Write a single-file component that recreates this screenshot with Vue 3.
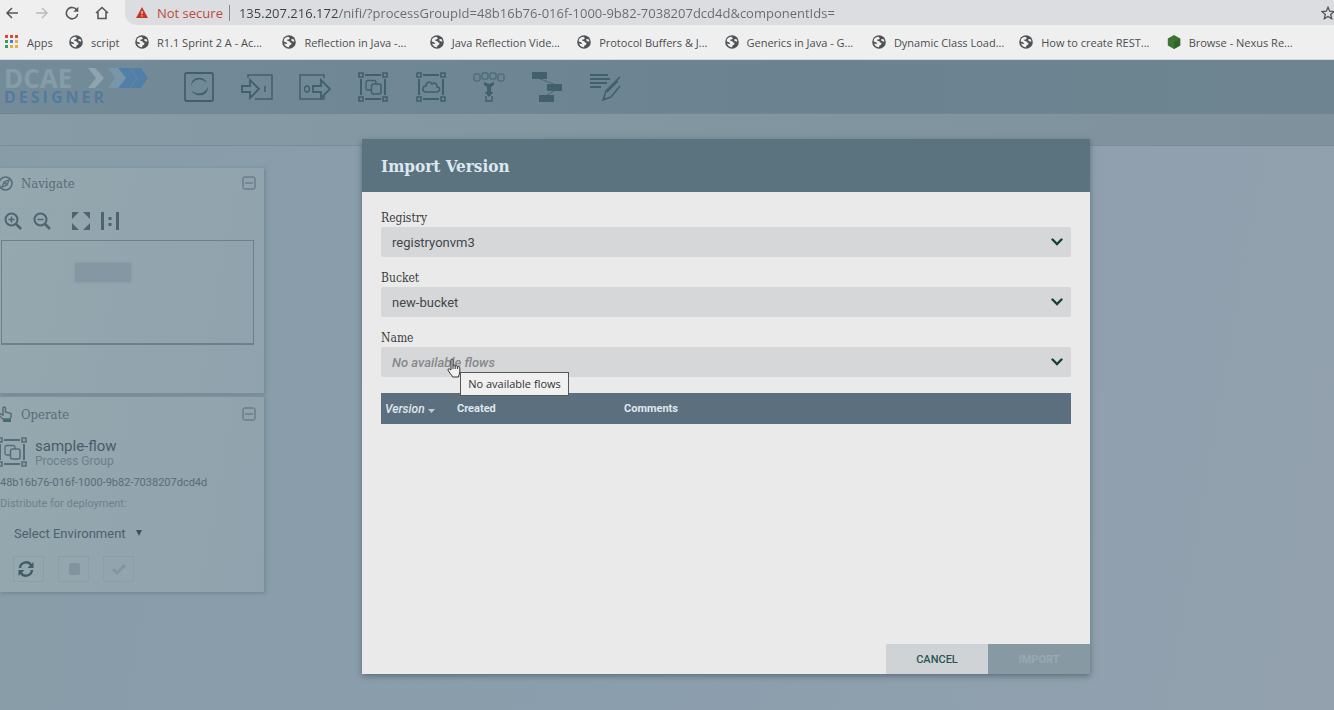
<script setup>
import { ref } from 'vue'

const url = ref('135.207.216.172/nifi/?processGroupId=48b16b76-016f-1000-9b82-7038207dcd4d&componentIds=')
const bookmarks = [
  'R1.1 Sprint 2 A - Ac...',
  'Reflection in Java -...',
  'Java Reflection Vide...',
  'Protocol Buffers & J...',
  'Generics in Java - G...',
  'Dynamic Class Load...',
  'How to create REST...',
]
const appDots = ['#d9483b', '#d9483b', '#d9483b', '#3a9a5b', '#3f7fd0', '#e0b13c', '#3a9a5b', '#e0b13c', '#e0b13c']
const fields = [
  { id: 'registry', label: 'Registry', value: 'registryonvm3', empty: false },
  { id: 'bucket', label: 'Bucket', value: 'new-bucket', empty: false },
  { id: 'name', label: 'Name', value: 'No available flows', empty: true },
]
</script>

<template>
  <div class="page">
    <svg class="defs" width="0" height="0" aria-hidden="true">
      <symbol id="globe" viewBox="0 0 14 14">
        <circle cx="7" cy="7" r="6.8" fill="#505356" />
        <path d="M2 4.200C3 2.600 4.600 1.800 6.300 1.700L8 3.200 6.600 4.400 5.400 4.600 5.200 5.800 7.400 6.200 8 7.400 9.600 7.800 9 9.800 7.500 10.600 7 12.300C4.600 12.200 2.800 10.900 2 8.600L4.200 9 5.400 8.400 4 7.200 1.700 6.600ZM9.200 4.300L11.300 3.900 12.200 5.600 12.300 6.800 10.500 6.300 9.300 5.600Z" fill="#f0f0f0" />
      </symbol>
      <symbol id="group" viewBox="0 0 30 30">
        <g fill="none" stroke="currentColor">
          <path d="M7 3H23M7 27H23M3 7V23M27 7V23" stroke-width="2" />
          <path d="M1 1H5V5H1ZM25 1H29V5H25ZM1 25H5V29H1ZM25 25H29V29H25Z" stroke-width="1.600" />
          <path d="M13 18H10A2 2 0 0 1 8 16V10.500A2 2 0 0 1 10 8.500H16A2 2 0 0 1 18 10.500V12" stroke-width="1.300" />
          <rect x="13.500" y="12" width="9.500" height="10" rx="2" stroke-width="1.500" />
        </g>
      </symbol>
      <symbol id="minus-box" viewBox="0 0 14 14">
        <rect x="1" y="1" width="12" height="12" rx="1.500" fill="none" stroke="currentColor" />
        <path d="M3 7H11" stroke="currentColor" />
      </symbol>
    </svg>

    <div class="browser">
      <div class="address-row">
        <div class="nav">
          <button aria-label="Back"><svg width="14" height="14" viewBox="0 0 14 14"><path d="M13 7H2M7 2L2 7L7 12" fill="none" stroke="#55585b" stroke-width="1.500" /></svg></button>
          <button aria-label="Forward"><svg width="14" height="14" viewBox="0 0 14 14"><path d="M1 7H12M7 2L12 7L7 12" fill="none" stroke="#b9babc" stroke-width="1.400" /></svg></button>
          <button aria-label="Reload"><svg width="14" height="14" viewBox="0 0 14 14"><path d="M11.700 3.800A5.700 5.700 0 1 0 12.700 8" fill="none" stroke="#55585b" stroke-width="1.600" /><path d="M13.300 .8V5.800H8.300Z" fill="#55585b" /></svg></button>
          <button aria-label="Home"><svg width="14" height="14" viewBox="0 0 14 14"><path d="M1 7L7 1.500L13 7M3 6V12.500H11V6" fill="none" stroke="#55585b" stroke-width="1.600" /></svg></button>
        </div>
        <div class="omnibox">
          <button class="unsafe"><svg width="12" height="11" viewBox="0 0 12 11"><path d="M6 0L12 11H0Z" fill="#c5372c" /><path d="M6 4V7M6 8.200V9.500" stroke="#f0dedd" stroke-width="1.200" /></svg>Not secure</button>
          <span class="bar"></span>
          <input v-model="url" class="url" aria-label="Address" />
          <button class="star" aria-label="Bookmark this page"><svg width="14" height="14" viewBox="0 0 14 14"><path d="M7 1.300L8.700 5.200 13 5.600 9.700 8.400 10.700 12.700 7 10.400 3.300 12.700 4.300 8.400 1 5.600 5.300 5.200Z" fill="none" stroke="#505356" stroke-width="1.300" /></svg></button>
        </div>
      </div>
      <nav class="bookmarks">
        <a href="#" class="apps">
          <svg width="14" height="14" viewBox="0 0 14 14"><rect v-for="(c, i) in appDots" :key="i" :x="(i % 3) * 5" :y="Math.floor(i / 3) * 5" width="3" height="3" :fill="c" /></svg>Apps
        </a>
        <a href="#" class="script"><svg width="14" height="14"><use href="#globe" /></svg>script</a>
        <a v-for="b in bookmarks" :key="b" href="#" class="mark"><svg width="14" height="14"><use href="#globe" /></svg>{{ b }}</a>
        <a href="#" class="mark"><svg width="14" height="14" viewBox="0 0 14 14"><path d="M7 0L13.200 3.500V10.500L7 14L.8 10.500V3.500Z" fill="#3c7434" /><path d="M7 7L13.200 3.500V10.500L7 14Z" fill="#2f642d" /></svg>Browse - Nexus Re...</a>
      </nav>
    </div>

    <header class="toolbar">
      <div class="logo">
        <div class="logo-top">DCAE
          <svg width="64" height="24" viewBox="0 0 64 24">
            <path d="M2 2H9L18 12L9 22H2L10 12Z" fill="#8fa4af" />
            <path d="M22 2H36L42 12L36 22H22L29 12Z" fill="#7895a9" />
            <path d="M32 2H55L62 12L55 22H32L40 12Z" fill="#517fa7" />
            <path d="M44 2L51 12L44 22" fill="none" stroke="#6489aa" />
          </svg>
        </div>
        <div class="logo-bottom">DESIGNER</div>
      </div>
      <div class="tools">
        <button aria-label="Processor"><svg width="30" height="30" viewBox="0 0 30 30"><rect x="1" y="1" width="28" height="28" rx="1.500" fill="none" stroke="currentColor" stroke-width="1.800" /><path d="M7 14C7 4 20 3 23 11C18 6 10 6 7 14ZM24 15C24 25 11 26 7 18C12 23 20 23 24 15Z" fill="currentColor" /></svg></button>
        <button aria-label="Input Port"><svg width="32" height="30" viewBox="0 0 32 30"><path d="M7 6V3H31V27H14M24 14V20" fill="none" stroke="currentColor" stroke-width="1.500" /><path d="M1 14H9V8L18 17L9 26V20H1Z" fill="none" stroke="currentColor" stroke-width="1.800" /></svg></button>
        <button aria-label="Output Port"><svg width="32" height="30" viewBox="0 0 32 30"><path d="M25 6V3H1V27H25V24" fill="none" stroke="currentColor" stroke-width="1.500" /><ellipse cx="8" cy="17" rx="2.500" ry="3" fill="none" stroke="currentColor" stroke-width="1.300" /><path d="M14 14H22V8L31 17L22 26V20H14Z" fill="none" stroke="currentColor" stroke-width="1.800" /></svg></button>
        <button aria-label="Process Group"><svg width="30" height="30"><use href="#group" /></svg></button>
        <button aria-label="Remote Process Group"><svg width="30" height="30" viewBox="0 0 30 30"><g fill="none" stroke="currentColor"><path d="M7 3H23M7 27H23M3 7V23M27 7V23" stroke-width="2" /><path d="M1 1H5V5H1ZM25 1H29V5H25ZM1 25H5V29H1ZM25 25H29V29H25Z" stroke-width="1.600" /><path d="M9 20H21C25 19 24 15 21 15C21 11 18 10 16 12C13 8 10 11 10 14C6 14 6 19 9 20Z" stroke-width="1.600" /></g></svg></button>
        <button aria-label="Funnel"><svg width="32" height="30" viewBox="0 0 32 30"><g fill="none" stroke="currentColor"><rect x="1" y="2" width="6" height="7" rx="1.500" /><rect x="9" y="1" width="6" height="6" rx="1" /><rect x="17" y="1" width="6" height="6" rx="1" /><rect x="25" y="2" width="6" height="7" rx="1.500" /><path d="M13 24V29H19V24" stroke-width="1.400" /></g><path d="M11 10L16 12L21 10V13L18 15V20H20.500L16 25L11.500 20H14V15L11 13Z" fill="currentColor" /></svg></button>
        <button aria-label="Template"><svg width="32" height="30" viewBox="0 0 32 30"><path d="M1 0H16V7H1ZM16 12H31V19H16ZM8 23H23V30H8Z" fill="currentColor" /><path d="M9 7L23 12M23 19L16 23" stroke="currentColor" stroke-width=".8" /></svg></button>
        <button aria-label="Label"><svg width="32" height="30" viewBox="0 0 32 30"><path d="M1 3H19M1 7H21M1 11H18M1 15H12" stroke="currentColor" stroke-width="1.800" /><path d="M31 5L17 19L14 28L22 25L31 14M18 20L29 9" fill="none" stroke="currentColor" stroke-width="1.500" /><path d="M14 28L15 25L18 27Z" fill="currentColor" /></svg></button>
      </div>
    </header>
    <div class="status"></div>

    <main class="canvas">
      <section class="panel navigate">
        <h2>
          <svg width="15" height="15" viewBox="0 0 15 15"><circle cx="7.500" cy="7.500" r="6.500" fill="none" stroke="currentColor" stroke-width="1.600" /><path d="M11 4L9 9L4 11L6 6Z" fill="none" stroke="currentColor" stroke-width="1.300" /><circle cx="7.500" cy="7.500" r="1.200" fill="currentColor" /></svg>
          <span>Navigate</span>
          <button aria-label="Collapse Navigate"><svg width="14" height="14"><use href="#minus-box" /></svg></button>
        </h2>
        <div class="zoom">
          <button aria-label="Zoom in"><svg width="18" height="18" viewBox="0 0 18 18"><circle cx="7.500" cy="7.500" r="6" fill="none" stroke="currentColor" stroke-width="2" /><path d="M12 12L17 17" stroke="currentColor" stroke-width="2.500" /><path d="M4.500 7.500H10.500M7.500 4.500V10.500" stroke="currentColor" stroke-width="1.400" /></svg></button>
          <button aria-label="Zoom out"><svg width="18" height="18" viewBox="0 0 18 18"><circle cx="7.500" cy="7.500" r="6" fill="none" stroke="currentColor" stroke-width="2" /><path d="M12 12L17 17" stroke="currentColor" stroke-width="2.500" /><path d="M4.500 7.500H10.500" stroke="currentColor" stroke-width="1.400" /></svg></button>
          <button aria-label="Fit" class="fit"><svg width="18" height="18" viewBox="0 0 18 18"><path d="M0 0H7L0 7ZM11 0H18V7ZM0 11L7 18H0ZM18 11V18H11Z" fill="currentColor" /></svg></button>
          <button aria-label="Actual size"><svg width="18" height="18" viewBox="0 0 18 18"><path d="M0 0H3V18H0ZM15 0H18V18H15ZM7.500 5H10.500V8H7.500ZM7.500 11H10.500V14H7.500Z" fill="currentColor" /></svg></button>
        </div>
        <div class="birdseye"><div class="node"></div></div>
      </section>

      <section class="panel operate">
        <h2>
          <svg width="15" height="17" viewBox="0 0 15 17"><path d="M5 13L1 9.500V7.500L5 9V2C5 .5 7.500 .5 7.500 2V6L13 7.500V11L12 13Z" fill="none" stroke="currentColor" stroke-width="1.500" /><path d="M5 13H13V16H5Z" fill="#41706f" /></svg>
          <span>Operate</span>
          <button aria-label="Collapse Operate"><svg width="14" height="14"><use href="#minus-box" /></svg></button>
        </h2>
        <div class="component">
          <svg width="30" height="30"><use href="#group" /></svg>
          <div><div class="flow">sample-flow</div><div class="kind">Process Group</div></div>
        </div>
        <div class="uuid">48b16b76-016f-1000-9b82-7038207dcd4d</div>
        <label class="distribute" for="environment">Distribute for deployment:</label>
        <div class="env"><select id="environment"><option>Select Environment</option></select><svg width="6" height="6" viewBox="0 0 6 6"><path d="M0 0H6L3 6Z" fill="#3f535f" /></svg></div>
        <div class="actions">
          <button aria-label="Refresh"><svg width="16" height="16" viewBox="0 0 16 16"><path d="M2 7A6 6 0 0 1 13 4M14 9A6 6 0 0 1 3 12" fill="none" stroke="#405c67" stroke-width="2.300" /><path d="M15.500 1V7H9.500ZM.5 15V9H6.500Z" fill="#405c67" /></svg></button>
          <button aria-label="Delete" disabled><svg width="14" height="14" viewBox="0 0 14 14"><rect x="2" y="1" width="11" height="12" rx="2" fill="#82959f" /></svg></button>
          <button aria-label="Apply" disabled><svg width="14" height="14" viewBox="0 0 14 14"><path d="M1 7L5 11L13 3" fill="none" stroke="#82959f" stroke-width="3" /></svg></button>
        </div>
      </section>
    </main>

    <div class="layer">
      <div class="dialog" role="dialog" aria-labelledby="dialog-title">
        <h1 id="dialog-title">Import Version</h1>
        <div class="body">
          <div v-for="f in fields" :key="f.id" class="field">
            <label :for="f.id">{{ f.label }}</label>
            <div class="combo">
              <select :id="f.id" :class="{ empty: f.empty }"><option>{{ f.value }}</option></select>
              <svg width="12" height="8" viewBox="0 0 12 8"><path d="M1.500 1.500L6 6L10.500 1.500" fill="none" stroke="#173f3c" stroke-width="2.400" stroke-linecap="round" /></svg>
              <template v-if="f.empty">
                <div class="tooltip" role="tooltip">No available flows</div>
                <svg class="pointer" width="14" height="20" viewBox="0 0 14 20"><path d="M4 12V2C4 .6 6 .6 6 2V8C6 6.700 8.200 6.700 8.200 8.200C8.400 7.200 10.400 7.400 10.400 9C11 8.200 12.800 8.600 12.800 10V14C12.800 16 11.500 17 11.500 19H5.500C5 17 2 14.500 1 12C.6 10.700 2.300 10.300 4 12Z" fill="#f2f2f2" stroke="#333" /><path d="M6 8V11M8.200 8V11M10.400 9V11" stroke="#333" /></svg>
              </template>
            </div>
          </div>
          <table>
            <thead>
              <tr>
                <th class="version">Version <svg width="7" height="4" viewBox="0 0 7 4"><path d="M0 0H7L3.500 4Z" fill="#b9cbd6" /></svg></th>
                <th class="created">Created</th>
                <th>Comments</th>
              </tr>
            </thead>
          </table>
        </div>
        <div class="footer">
          <button class="cancel">CANCEL</button>
          <button class="import" disabled>IMPORT</button>
        </div>
      </div>
    </div>
  </div>
</template>

<style>
body { overflow: hidden; }
</style>

<style scoped>
.page {
  position: relative;
  display: flex;
  flex-direction: column;
  height: 100vh;
  overflow: hidden;
  font-family: Roboto, "Liberation Sans", sans-serif;
  background: linear-gradient(100deg, #879ca7 0%, #8b9ead 50%, #93a1ae 100%);
}
.defs { position: absolute; }
button { border: 0; padding: 0; margin: 0; background: none; color: inherit; font: inherit; display: flex; align-items: center; justify-content: center; }
select { appearance: none; border: 0; margin: 0; background: none; font: inherit; color: inherit; }
svg { flex: none; display: block; }

.browser { background: #efefef; font-family: "Open Sans", "Noto Sans", sans-serif; color: #4b4e51; border-bottom: 1px solid #cfd9e0; }
.address-row { display: flex; height: 25px; align-items: stretch; }
.nav { display: flex; align-items: center; gap: 16px; padding: 0 16px 0 5px; }
.omnibox { flex: 1; display: flex; align-items: center; padding-left: 11px; background: #dcdde0; border-radius: 0 0 0 12px; min-width: 0; }
.unsafe { gap: 9px; font-size: 13px; color: #bd4a40; white-space: nowrap; }
.bar { width: 1px; height: 16px; background: #85878a; margin: 0 9px 0 6px; }
.url { flex: 1; min-width: 0; border: 0; padding: 0; font: 13px "Open Sans", "Noto Sans", sans-serif; color: transparent; background: linear-gradient(90deg, #3b3e42 99px, #66696d 99px); background-clip: text; outline: 0; }
.star { margin-right: -1px; }
.bookmarks { display: flex; height: 34px; align-items: center; padding: 0 20px 0 5px; font-size: 11px; }
.bookmarks a { display: flex; align-items: center; gap: 8px; color: inherit; text-decoration: none; white-space: nowrap; }
.bookmarks .apps { width: 64px; }
.bookmarks .script { width: 66px; }
.bookmarks .mark { flex: 1 1 0; min-width: 0; }

.toolbar { display: flex; height: 54px; align-items: center; background: linear-gradient(90deg, #748c99, #6b8391 60%, #6e8491); color: #415f6d; border-bottom: 1px solid #718690; box-sizing: border-box; }
.logo { width: 184px; padding-left: 4px; box-sizing: border-box; font-family: "Open Sans", sans-serif; font-weight: 700; }
.logo-top { display: flex; align-items: center; gap: 14px; height: 20px; font-size: 26px; line-height: 20px; color: #869da9; }
.logo-bottom { font-size: 16px; line-height: 18px; letter-spacing: 3px; color: #547b9c; }
.tools { display: flex; gap: 28px; }
.tools button { width: 30px; height: 30px; }
.status { height: 31px; background: linear-gradient(90deg, #869ba5, #7e919c); border-bottom: 1px solid #788d98; }

.canvas { padding-top: 22px; color: #566d79; }
.panel { width: 264px; box-sizing: border-box; background: linear-gradient(100deg, #95a8af, #90a2ad); box-shadow: 1px 1px 4px #6d828f; }
.navigate { height: 226px; border-bottom: 1px solid #7c8f99; }
.operate { height: 195px; margin-top: 3px; padding-top: 2px; }
h2 { display: flex; align-items: center; margin: 0; height: 30px; padding-right: 8px; font: 13px "DejaVu Serif Condensed", "DejaVu Serif", serif; }
h2 > svg { margin-left: -2px; }
h2 span { flex: 1; padding-left: 8px; }
.zoom { display: flex; gap: 3px; height: 26px; margin-top: 10px; color: #4d6572; }
.zoom button { width: 26px; border: 1px solid #90a5ae; box-sizing: border-box; }
.zoom .fit { margin-left: 10px; }
.birdseye { width: 178px; height: 80px; margin: 6px 0 0 1px; padding: 22px 0 0 73px; border: 1px solid #6d818c; border-bottom-width: 2px; }
.node { width: 56px; height: 19px; background: #8497a2; box-shadow: 0 0 3px #8497a2; }
.component { display: flex; gap: 8px; align-items: center; height: 34px; margin: 6px 0 0 -3px; }
.flow { font-size: 15px; line-height: 18px; color: #485c68; }
.kind { font-size: 12px; line-height: 13px; color: #6b818c; }
.uuid { margin-top: 6px; font-size: 11px; line-height: 16px; color: #576d79; }
.distribute { display: block; margin-top: 4px; font-size: 11px; line-height: 18px; color: #6d828c; }
.env { display: flex; align-items: center; margin-top: 8px; height: 24px; padding-left: 14px; font-size: 13px; color: #4c616d; }
.env select { width: 122px; padding: 0; }
.actions { display: flex; gap: 14px; margin: 11px 0 0 13px; }
.actions button { width: 31px; height: 26px; border: 1px solid #8b9fa9; box-sizing: border-box; }
.actions button:first-child { padding-right: 6px; }

.layer { position: absolute; inset: 0; display: flex; padding: 139px 244px 36px 362px; }
.dialog { flex: 1; display: flex; flex-direction: column; min-width: 0; background: #eaeaea; box-shadow: 0 2px 6px #5a6d79; }
h1 { margin: 0; height: 53px; padding: 0 19px; display: flex; align-items: center; font: 700 17px "DejaVu Serif Condensed", "DejaVu Serif", serif; color: #dbe8f1; background: #5b727f; }
.body { flex: 1; padding: 15px 19px 0; }
.field { margin-bottom: 10px; }
.field label { display: block; height: 20px; line-height: 22px; font-size: 12px; font-family: "DejaVu Serif Condensed", "DejaVu Serif", serif; color: #3a3d40; }
.combo { position: relative; display: flex; align-items: center; height: 30px; background: #d5d7d8; border-radius: 2px; padding-right: 8px; }
.combo select { flex: 1; height: 30px; padding: 0 11px; font-size: 13px; color: #43474a; }
.combo select.empty { font-style: italic; font-weight: 500; color: #85898b; }
.tooltip { position: absolute; left: 79px; top: 25px; box-sizing: border-box; width: 109px; height: 24px; text-align: center; white-space: nowrap; background: #f0f0f0; border: 1px solid #55595c; font: 11px/22px "Open Sans", sans-serif; color: #333; }
.pointer { position: absolute; left: 66px; top: 11px; }
table { width: 100%; margin-top: 16px; border-collapse: collapse; table-layout: fixed; background: #5b6f7e; color: #dfe7ec; font-size: 11px; }
th { height: 31px; padding: 0 0 0 4px; text-align: left; font-weight: 700; }
.version { width: 68px; font-size: 12px; font-style: italic; font-weight: 500; }
.version svg { display: inline-block; }
.created { width: 163px; }
.footer { display: flex; justify-content: flex-end; font-size: 11px; font-weight: 700; }
.footer button { width: 102px; height: 30px; }
.cancel { background: #d0d3d5; color: #2a5558; font-weight: 500; }
.import { background: #879aa4; color: #9aa8b0; }
</style>
